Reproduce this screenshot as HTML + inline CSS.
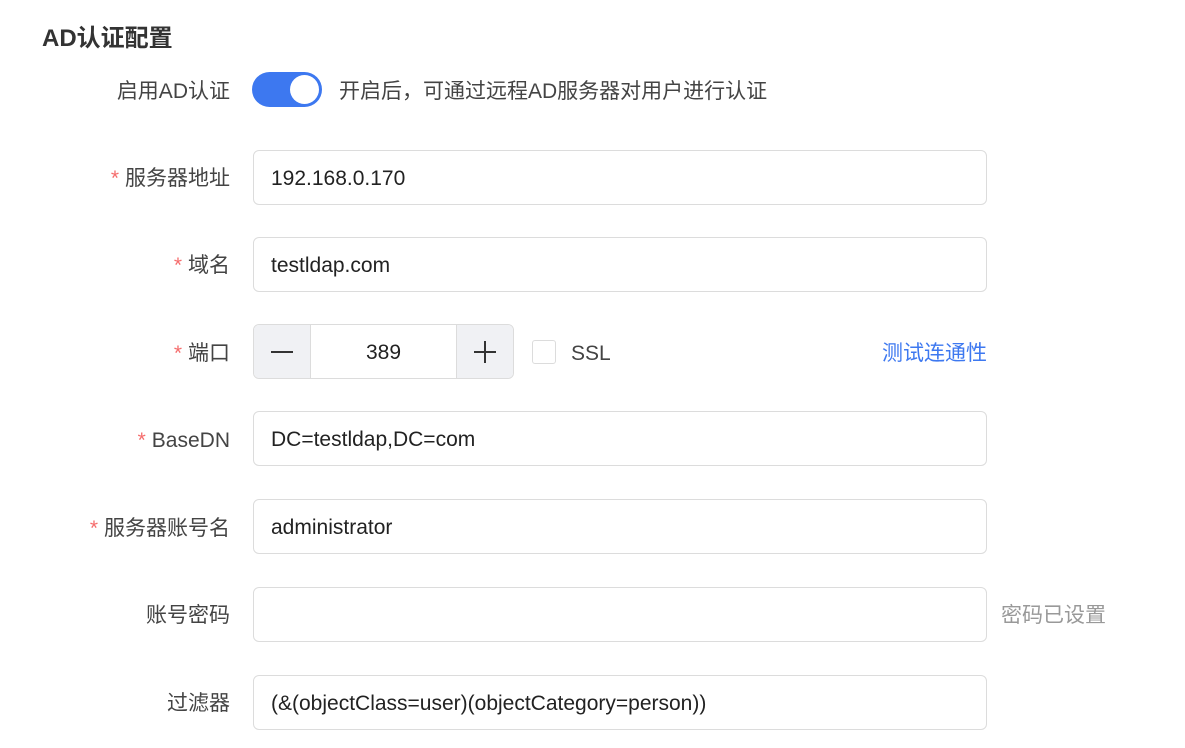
<!DOCTYPE html>
<html><head><meta charset="utf-8"><style>
*{box-sizing:border-box;margin:0;padding:0}
body{width:1185px;height:748px;background:#fff;font-family:"Liberation Sans","Noto Sans CJK SC",sans-serif;color:#333;position:relative;overflow:hidden}
.t{position:absolute;left:42px;top:18px;font-size:24px;font-weight:bold;color:#333}
.lab{position:absolute;right:955px;font-size:21px;color:#444;white-space:nowrap;line-height:26px}
.lab i{color:#f56c6c;font-style:normal;margin-right:6px}
.inp{position:absolute;left:253px;width:734px;height:55px;border:1.5px solid #dcdcdc;border-radius:6px;font-size:21px;color:#222;padding-left:17px;line-height:55px}
</style></head><body>
<div class="t">AD认证配置</div>

<div class="lab" style="top:79px">启用AD认证</div>
<div style="position:absolute;left:252px;top:72px;width:70px;height:35px;border-radius:18px;background:#3d78f0"><div style="position:absolute;right:3px;top:3px;width:29px;height:29px;border-radius:50%;background:#fff"></div></div>
<div style="position:absolute;left:339px;top:79px;font-size:21px;color:#444;line-height:26px">开启后，可通过远程AD服务器对用户进行认证</div>

<div class="lab" style="top:166px"><i>*</i>服务器地址</div>
<div class="inp" style="top:150px">192.168.0.170</div>

<div class="lab" style="top:253px"><i>*</i>域名</div>
<div class="inp" style="top:237px">testldap.com</div>

<div class="lab" style="top:341px"><i>*</i>端口</div>
<div style="position:absolute;left:253px;top:324px;width:261px;height:55px;border:1.5px solid #dcdcdc;border-radius:6px;overflow:hidden;display:flex">
 <div style="width:57px;background:#f0f1f4;border-right:1.5px solid #dcdcdc;position:relative"><div style="position:absolute;left:17px;top:26px;width:22px;height:1.5px;background:#333"></div></div>
 <div style="flex:1;text-align:center;font-size:21px;line-height:55px;color:#222">389</div>
 <div style="width:57px;background:#f0f1f4;border-left:1.5px solid #dcdcdc;position:relative"><div style="position:absolute;left:17px;top:26px;width:22px;height:1.5px;background:#333"></div><div style="position:absolute;left:27px;top:16px;width:1.5px;height:22px;background:#333"></div></div>
</div>
<div style="position:absolute;left:532px;top:340px;width:24px;height:24px;border:1.5px solid #dcdcdc;border-radius:3px"></div>
<div style="position:absolute;left:571px;top:341px;font-size:21px;color:#444;line-height:26px">SSL</div>
<div style="position:absolute;right:198px;top:341px;font-size:21px;color:#3d78f0;line-height:26px">测试连通性</div>

<div class="lab" style="top:428px"><i>*</i>BaseDN</div>
<div class="inp" style="top:411px">DC=testldap,DC=com</div>

<div class="lab" style="top:516px"><i>*</i>服务器账号名</div>
<div class="inp" style="top:499px">administrator</div>

<div class="lab" style="top:603px">账号密码</div>
<div class="inp" style="top:587px"></div>
<div style="position:absolute;left:1001px;top:603px;font-size:21px;color:#999;line-height:26px">密码已设置</div>

<div class="lab" style="top:691px">过滤器</div>
<div class="inp" style="top:675px">(&amp;(objectClass=user)(objectCategory=person))</div>
</body></html>
